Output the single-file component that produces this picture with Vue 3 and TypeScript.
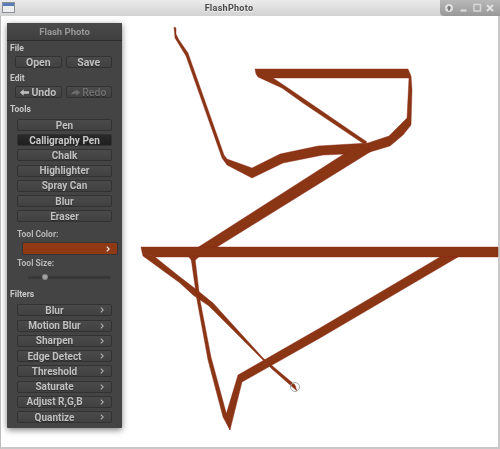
<template>
  <div class="window">
    <header class="titlebar">
      <div class="app-icon"><span></span></div>
      <div class="title">FlashPhoto</div>
      <div class="controls">
        <svg width="60" height="16" viewBox="0 0 60 16">
          <circle cx="9" cy="8" r="4" fill="#e0e0e0" />
          <path d="M9 5.500 L11.500 8.500 H10 V10.500 H8 V8.500 H6.500 Z" fill="#777" />
          <rect x="20.500" y="9.500" width="6" height="2" fill="#e0e0e0" />
          <rect x="34" y="4.500" width="6.500" height="6.500" fill="none" stroke="#d8d8d8" stroke-width="1.500" />
          <path d="M47 5 L53 11 M53 5 L47 11" stroke="#e0e0e0" stroke-width="2" />
        </svg>
      </div>
    </header>

    <main class="canvas">
      <svg class="drawing" width="500" height="449" viewBox="0 0 500 449">
        <g fill="#8a3615" stroke="#8a2012" stroke-width="0.4" stroke-linejoin="round">
          <polygon v-for="(s, i) in strokes" :key="i" :points="s" />
        </g>
        <circle cx="295" cy="387" r="4.500" fill="none" stroke="#a8a8a8" stroke-width="1" />
      </svg>

      <aside class="panel">
        <div class="panel-title">Flash Photo</div>
        <div class="panel-body">
          <div class="label">File</div>
          <div class="pair">
            <button class="btn">Open</button>
            <button class="btn">Save</button>
          </div>

          <div class="label edit">Edit</div>
          <div class="pair">
            <button class="btn">
              <svg class="arrow" width="9" height="7" viewBox="0 0 11 8"><path d="M0 4 L4.500 0 V2.500 H11 V5.500 H4.500 V8 Z" fill="currentColor" /></svg>
              Undo
            </button>
            <button class="btn off">
              <svg class="arrow" width="9" height="7" viewBox="0 0 11 8"><path d="M11 4 L6.500 0 V2 C3 2 1 4 0 7 C2 5.500 4 5.500 6.500 5.500 V8 Z" fill="currentColor" /></svg>
              Redo
            </button>
          </div>

          <div class="label tools">Tools</div>
          <div class="stack">
            <button v-for="t in tools" :key="t" class="btn" :class="{ active: t === 'Calligraphy Pen' }">{{ t }}</button>
          </div>

          <div class="sub-label color-label">Tool Color:</div>
          <div class="swatch">
            <svg width="4" height="6" viewBox="0 0 5 7"><path d="M1 .5 L4 3.500 L1 6.500" fill="none" stroke="#eee" stroke-width="1.500" /></svg>
          </div>

          <div class="sub-label size-label">Tool Size:</div>
          <div class="slider"><span class="thumb"></span></div>

          <div class="label filters">Filters</div>
          <div class="stack">
            <button v-for="f in filters" :key="f" class="btn filter">
              <span>{{ f }}</span>
              <svg width="4" height="6" viewBox="0 0 5 7"><path d="M1 .5 L4 3.500 L1 6.500" fill="none" stroke="#b8b8b8" stroke-width="1.300" /></svg>
            </button>
          </div>
        </div>
      </aside>
    </main>
  </div>
</template>

<script setup lang="ts">
const tools: string[] = ['Pen', 'Calligraphy Pen', 'Chalk', 'Highlighter', 'Spray Can', 'Blur', 'Eraser']
const filters: string[] = ['Blur', 'Motion Blur', 'Sharpen', 'Edge Detect', 'Threshold', 'Saturate', 'Adjust R,G,B', 'Quantize']

// painted strokes, one outline per piece, in page pixels
const strokes: string[] = [
  // long curve from the top left into the junction
  '174,27 176,28 176,34 179,40 188,53 224,155 227,159 252,168 280,154 318,146 368,143 373,146 370,152 347,154 323,155 283,163 252,178 227,165 222,158 186,56 175,38',
  // top bar, right hand curve and thin diagonal
  '255,69 408,69 411,76 412,90 411,125 403,135 390,146 370,152 368,143 389,136 407,118 409,78 273,78 288,88 367,142 364,144 303,103 282,88 258,77 256,74',
  // diagonal down to the long bar
  '358,145 370,152 217,247 197,248',
  // long bar
  '141,247 498,247 498,257 155,257 142,252',
  // blob under the bar
  '188,256 200,256 193,262',
  // stroke from the left end to the cursor
  '142,252 155,257 180,277 197,290 213,303 263,358 295,385 297,391 272,369 209,306 193,295 180,283 143,256',
  // branch from the bar to the lower tip
  '440,257 458,257 320,338 242,382 230,430 225,418 238,375 320,328',
  // thin stroke back up
  '191,258 195,258 200,300 211,357 227,416 230,430 223,417 208,360 197,300',
]
</script>

<style>
html,
body {
  margin: 0;
  background: #fff;
}
</style>

<style scoped>
.window {
  width: 500px;
  height: 449px;
  display: flex;
  flex-direction: column;
  overflow: hidden;
  font-family: Roboto, "Liberation Sans", sans-serif;
}

.titlebar {
  height: 16px;
  flex: none;
  display: flex;
  align-items: center;
  justify-content: center;
  padding-right: 42px;
  position: relative;
  background: linear-gradient(#ebebeb, #d2d2d2);
}

.title {
  font-size: 9px;
  font-weight: 700;
  letter-spacing: 0.3px;
  color: #4a4a4a;
  text-shadow: 0 1px 0 #f2f2f2;
  filter: blur(0.3px);
}

.app-icon {
  position: absolute;
  left: 2px;
  top: 2px;
  width: 13px;
  height: 11px;
  border: 1px solid #8a8f98;
  background: #eee;
  box-sizing: border-box;
}

.app-icon span {
  display: block;
  height: 3px;
  background: #5a7fb8;
}

.controls {
  position: absolute;
  right: 0;
  top: 0;
  width: 60px;
  height: 16px;
  background: linear-gradient(#b8b8b8, #989898);
  border-bottom-left-radius: 4px;
}

.controls svg {
  display: block;
  filter: blur(0.4px);
}

.canvas {
  flex: 1;
  position: relative;
  background: #fff;
  border-left: 1px solid #bdbdbd;
  border-right: 2px solid #c8c8c8;
  border-bottom: 2px solid #c8c8c8;
}

.drawing {
  position: absolute;
  left: -1px;
  top: -16px;
}

.panel {
  position: absolute;
  left: 6px;
  top: 7px;
  width: 115px;
  height: 405px;
  background: #444;
  box-shadow: 0 2px 6px rgba(0, 0, 0, 0.5);
  border-radius: 1px;
  display: flex;
  flex-direction: column;
  color: #c4c4c4;
}

.panel-title {
  height: 18px;
  flex: none;
  display: flex;
  align-items: center;
  justify-content: center;
  font-size: 9.500px;
  font-weight: 700;
  color: #999;
  background: linear-gradient(#4a4a4a, #3f3f3f);
  border-bottom: 1px solid #2c2c2c;
  box-sizing: border-box;
  filter: blur(0.3px);
}

.panel-body {
  display: flex;
  flex-direction: column;
  padding: 0 10px 0 3px;
  filter: blur(0.35px);
}

.label {
  font-size: 8.500px;
  font-weight: 700;
  line-height: 10px;
  color: #c8c8c8;
  margin-top: 2px;
}

.edit {
  margin-top: 5px;
}

.tools {
  margin-top: 6px;
  margin-bottom: 5px;
}

.filters {
  margin-top: 10px;
  margin-bottom: 5px;
}

.pair {
  display: flex;
  gap: 4px;
  margin-top: 3px;
  margin-left: 5px;
}

.pair .btn {
  flex: 1;
  font-size: 10.500px;
  justify-content: center;
}

.stack {
  display: flex;
  flex-direction: column;
  gap: 3.240px;
  margin-left: 7px;
}

.btn {
  height: 12px;
  padding: 0;
  display: flex;
  align-items: center;
  justify-content: center;
  gap: 2px;
  box-sizing: border-box;
  font-family: inherit;
  font-size: 10px;
  font-weight: 700;
  color: #c0c0c0;
  background: linear-gradient(#4a4a4a, #414141);
  border: 1px solid #323232;
  border-radius: 2px;
  text-shadow: 0 1px 0 #2c2c2c;
}

.btn.off {
  color: #6e6e6e;
}

.btn.active {
  background: linear-gradient(#2a2a2a, #1f1f1f);
  color: #c8c8c8;
}

.filter {
  position: relative;
}

.filter span {
  width: 72px;
  text-align: center;
  margin-right: 20px;
}

.filter svg {
  position: absolute;
  right: 7px;
  top: 2px;
}

.sub-label {
  font-size: 8.500px;
  font-weight: 700;
  line-height: 10px;
  color: #b8b8b8;
  margin-left: 7px;
}

.color-label {
  margin-top: 7px;
}

.size-label {
  margin-top: 4px;
}

.swatch {
  height: 11px;
  margin: 4px -5px 0 13px;
  display: flex;
  align-items: center;
  justify-content: flex-end;
  padding-right: 7px;
  background: #8f3a15;
  border-radius: 1px;
  box-shadow: 0 0 0 1px #353535;
}

.slider {
  position: relative;
  height: 3px;
  margin: 8px 1px 0 18px;
  background: #383838;
  border-radius: 2px;
}

.thumb {
  position: absolute;
  left: 14px;
  top: -2px;
  width: 6px;
  height: 6px;
  border-radius: 50%;
  background: radial-gradient(#b0b0b0, #707070);
}
</style>
